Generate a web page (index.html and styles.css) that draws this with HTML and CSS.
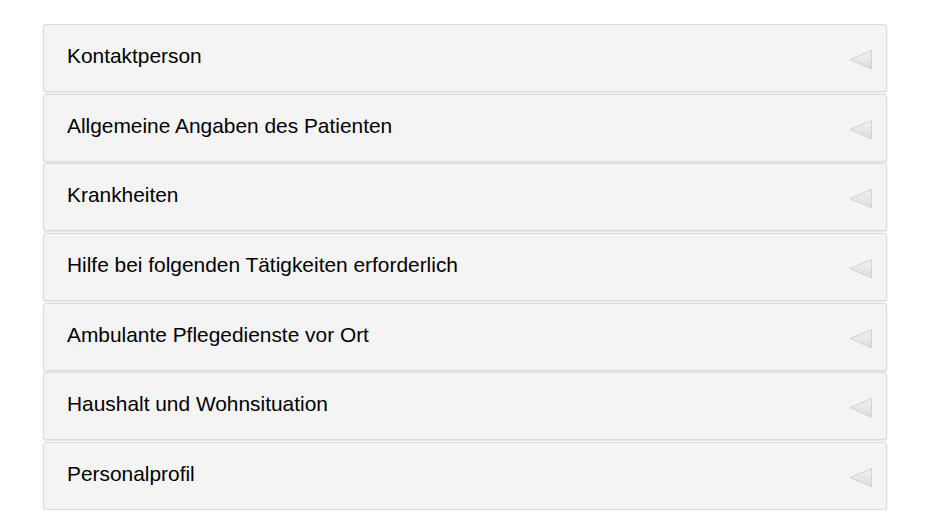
FILE: index.html
```html
<!DOCTYPE html>
<html>
<head>
<meta charset="utf-8">
<link rel="stylesheet" href="styles.css">
</head>
<body>
<div class="list">
  <div class="item"><span class="label">Kontaktperson</span><svg class="icon" width="24" height="22" viewBox="0 0 24 22"><defs><linearGradient id="g" x1="0" y1="0" x2="0" y2="1"><stop offset="0" stop-color="#f2f2f2"/><stop offset="1" stop-color="#dcdcdc"/></linearGradient></defs><path d="M1 10.5 L22.5 1.5 L22.5 20 Z" fill="url(#g)" stroke="#d2d2d2" stroke-width="1" stroke-linejoin="round"/></svg></div>
  <div class="item"><span class="label">Allgemeine Angaben des Patienten</span><svg class="icon" width="24" height="22" viewBox="0 0 24 22"><path d="M1 10.5 L22.5 1.5 L22.5 20 Z" fill="url(#g)" stroke="#d2d2d2" stroke-width="1" stroke-linejoin="round"/></svg></div>
  <div class="item"><span class="label">Krankheiten</span><svg class="icon" width="24" height="22" viewBox="0 0 24 22"><path d="M1 10.5 L22.5 1.5 L22.5 20 Z" fill="url(#g)" stroke="#d2d2d2" stroke-width="1" stroke-linejoin="round"/></svg></div>
  <div class="item"><span class="label">Hilfe bei folgenden Tätigkeiten erforderlich</span><svg class="icon" width="24" height="22" viewBox="0 0 24 22"><path d="M1 10.5 L22.5 1.5 L22.5 20 Z" fill="url(#g)" stroke="#d2d2d2" stroke-width="1" stroke-linejoin="round"/></svg></div>
  <div class="item"><span class="label">Ambulante Pflegedienste vor Ort</span><svg class="icon" width="24" height="22" viewBox="0 0 24 22"><path d="M1 10.5 L22.5 1.5 L22.5 20 Z" fill="url(#g)" stroke="#d2d2d2" stroke-width="1" stroke-linejoin="round"/></svg></div>
  <div class="item"><span class="label">Haushalt und Wohnsituation</span><svg class="icon" width="24" height="22" viewBox="0 0 24 22"><path d="M1 10.5 L22.5 1.5 L22.5 20 Z" fill="url(#g)" stroke="#d2d2d2" stroke-width="1" stroke-linejoin="round"/></svg></div>
  <div class="item"><span class="label">Personalprofil</span><svg class="icon" width="24" height="22" viewBox="0 0 24 22"><path d="M1 10.5 L22.5 1.5 L22.5 20 Z" fill="url(#g)" stroke="#d2d2d2" stroke-width="1" stroke-linejoin="round"/></svg></div>
</div>
</body>
</html>
```

FILE: styles.css
```css
html, body {
  margin: 0;
  padding: 0;
  background: #ffffff;
}
body {
  font-family: "Liberation Sans", Arial, sans-serif;
}
.list {
  display: flex;
  flex-direction: column;
  gap: 1.67px;
  padding: 24px 43px 0 43px;
}
.item {
  display: flex;
  align-items: center;
  justify-content: space-between;
  height: 66px;
  box-sizing: content-box;
  background: #f4f4f4;
  border: 1px solid #dadada;
  border-radius: 3px;
  box-shadow: 0 1px 2px rgba(0,0,0,0.12);
  padding: 0 13px 0 23px;
}
.label {
  font-size: 20.9px;
  color: #000000;
  margin-top: -4px;
}
.icon {
  display: block;
  margin-top: 4px;
}
```
